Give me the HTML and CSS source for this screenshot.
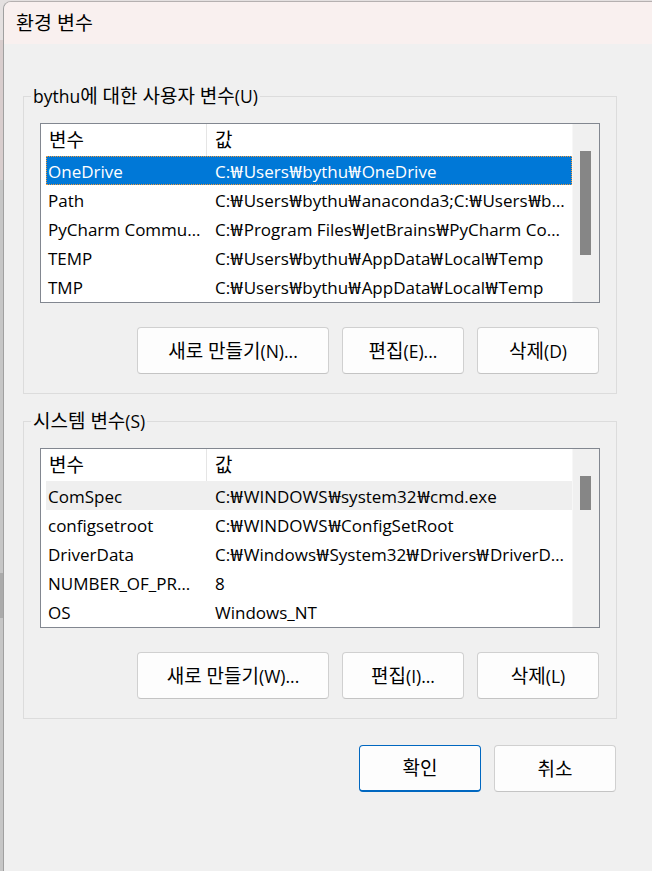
FILE: index.html
```html
<!DOCTYPE html>
<html lang="ko">
<head>
<meta charset="utf-8">
<title>환경 변수</title>
<link rel="stylesheet" href="styles.css">
</head>
<body>
<div class="desk">
  <div class="window">
    <div class="titlebar">환경 변수</div>
    <div class="content">
      <fieldset class="group">
        <legend>bythu<span class="k">에 대한 사용자 변수</span>(U)</legend>
        <div class="group-inner">
          <div class="listview">
            <div class="lv-main">
              <div class="lv-head"><div class="hc c1 k">변수</div><div class="hc c2 k">값</div></div>
              <div class="row selected"><div class="cell c1">OneDrive</div><div class="cell c2">C:<span class="w">₩</span>Users<span class="w">₩</span>bythu<span class="w">₩</span>OneDrive</div></div>
              <div class="row"><div class="cell c1">Path</div><div class="cell c2">C:<span class="w">₩</span>Users<span class="w">₩</span>bythu<span class="w">₩</span>anaconda3;C:<span class="w">₩</span>Users<span class="w">₩</span>bythu<span class="w">₩</span>anaconda3<span class="w">₩</span>Library<span class="w">₩</span>bin</div></div>
              <div class="row"><div class="cell c1">PyCharm Community Edition</div><div class="cell c2">C:<span class="w">₩</span>Program Files<span class="w">₩</span>JetBrains<span class="w">₩</span>PyCharm Community Edition<span class="w">₩</span>bin</div></div>
              <div class="row"><div class="cell c1">TEMP</div><div class="cell c2">C:<span class="w">₩</span>Users<span class="w">₩</span>bythu<span class="w">₩</span>AppData<span class="w">₩</span>Local<span class="w">₩</span>Temp</div></div>
              <div class="row"><div class="cell c1">TMP</div><div class="cell c2">C:<span class="w">₩</span>Users<span class="w">₩</span>bythu<span class="w">₩</span>AppData<span class="w">₩</span>Local<span class="w">₩</span>Temp</div></div>
            </div>
            <div class="scrollbar"><div class="thumb" style="margin-top:27px;height:104px"></div></div>
          </div>
          <div class="btnrow">
            <button class="btn wide"><span class="k">새로 만들기</span>(N)...</button>
            <button class="btn"><span class="k">편집</span>(E)...</button>
            <button class="btn"><span class="k">삭제</span>(D)</button>
          </div>
        </div>
      </fieldset>

      <fieldset class="group second">
        <legend><span class="k">시스템 변수</span>(S)</legend>
        <div class="group-inner">
          <div class="listview">
            <div class="lv-main">
              <div class="lv-head"><div class="hc c1 k">변수</div><div class="hc c2 k">값</div></div>
              <div class="row hover"><div class="cell c1">ComSpec</div><div class="cell c2">C:<span class="w">₩</span>WINDOWS<span class="w">₩</span>system32<span class="w">₩</span>cmd.exe</div></div>
              <div class="row"><div class="cell c1">configsetroot</div><div class="cell c2">C:<span class="w">₩</span>WINDOWS<span class="w">₩</span>ConfigSetRoot</div></div>
              <div class="row"><div class="cell c1">DriverData</div><div class="cell c2">C:<span class="w">₩</span>Windows<span class="w">₩</span>System32<span class="w">₩</span>Drivers<span class="w">₩</span>DriverData</div></div>
              <div class="row"><div class="cell c1">NUMBER_OF_PROCESSORS</div><div class="cell c2">8</div></div>
              <div class="row"><div class="cell c1">OS</div><div class="cell c2">Windows_NT</div></div>
            </div>
            <div class="scrollbar"><div class="thumb" style="margin-top:27px;height:34px"></div></div>
          </div>
          <div class="btnrow">
            <button class="btn wide"><span class="k">새로 만들기</span>(W)...</button>
            <button class="btn"><span class="k">편집</span>(I)...</button>
            <button class="btn"><span class="k">삭제</span>(L)</button>
          </div>
        </div>
      </fieldset>

      <div class="dlg-btns">
        <button class="btn default k">확인</button>
        <button class="btn k">취소</button>
      </div>
    </div>
  </div>
</div>
</body>
</html>
```

FILE: styles.css
```css
html, body {
  margin: 0;
  height: 100%;
  overflow: hidden;
}

body {
  font-family: "Open Sans", "Noto Sans CJK KR", sans-serif;
  font-size: 17px;
  color: #000;
  background: linear-gradient(to bottom, #e4e0e0 0, #e4e0e0 40px, #d8cdcd 40px, #d8cdcd 180px, #c6c6c6 180px, #c6c6c6 573px, #ababab 573px, #ababab 618px, #c6c6c6 618px);
}

.k {
  font-size: 19px;
}

.w {
  display: inline-block;
  width: 13.5px;
  text-align: center;
  transform: scaleX(1.3);
}

.desk {
  display: flex;
  height: 871px;
  box-sizing: border-box;
  padding: 1px 0 0 3px;
}

.window {
  flex: 1;
  background: #f0f0f0;
  border-left: 1px solid #a0a0a0;
  border-top: 1px solid #b5b0b0;
  border-top-left-radius: 8px;
  overflow: hidden;
}

.titlebar {
  height: 42px;
  line-height: 42px;
  background: #f9f0ef;
  padding-left: 12px;
  font-size: 19.5px;
}

.content {
  padding-left: 19px;
}

.group {
  width: 594px;
  box-sizing: border-box;
  margin: 41px 0 0 0;
  padding: 0;
  border: 1px solid #dcdcdc;
  min-width: 0;
}

.group.second {
  margin-top: 16px;
}

.group legend {
  margin-left: 7px;
  padding: 0 2px;
  line-height: 22px;
  height: 22px;
  font-size: 17.5px;
}

.group-inner {
  padding: 16px 16px 19px 16px;
}

.listview {
  display: flex;
  height: 180px;
  box-sizing: border-box;
  border: 1px solid #828790;
  background: #fff;
}

.lv-main {
  flex: 1;
  min-width: 0;
  overflow: hidden;
}

.lv-head {
  display: flex;
  height: 32px;
  line-height: 32px;
}

.hc.c1 {
  width: 166px;
  box-sizing: border-box;
  padding-left: 8px;
  border-right: 1px solid #e5e5e5;
}

.hc.c2 {
  flex: 1;
  padding-left: 8px;
}

.row {
  display: flex;
  height: 29px;
  line-height: 27px;
  margin-left: 5px;
  box-sizing: border-box;
  padding-top: 2px;
}

.row.selected {
  background: #0078d7;
  color: #fff;
  outline: 1px dotted #f09a3c;
  outline-offset: -1px;
}

.row.hover {
  background: #efefef;
}

.cell {
  white-space: nowrap;
  overflow: hidden;
  text-overflow: ellipsis;
  box-sizing: border-box;
}

.cell.c1 {
  width: 161px;
  padding-left: 2px;
  padding-right: 6px;
}

.cell.c2 {
  flex: 1;
  min-width: 0;
  padding-left: 8px;
  padding-right: 6px;
}

.scrollbar {
  width: 27px;
  flex: none;
  background: #f0f0f0;
  border-left: 1px solid #f7f7f7;
  box-sizing: border-box;
  padding-left: 7px;
}

.thumb {
  width: 11px;
  background: #868686;
}

.btnrow {
  display: flex;
  justify-content: flex-end;
  gap: 13px;
  margin-top: 24px;
  padding-right: 1px;
}

.btn {
  width: 122px;
  height: 47px;
  box-sizing: border-box;
  background: #fdfdfd;
  border: 1px solid #d0d0d0;
  border-bottom-color: #c4c4c4;
  border-radius: 4px;
  font-family: inherit;
  font-size: 17.5px;
  line-height: 22px;
  color: #000;
  padding: 0;
}

.btn.k {
  font-size: 19px;
}

.btn.wide {
  width: 192px;
}

.btn.default {
  border: 1px solid #0067c0;
  border-bottom-width: 2px;
}

.dlg-btns {
  width: 594px;
  display: flex;
  justify-content: flex-end;
  gap: 13px;
  margin-top: 26px;
  padding-right: 1px;
  box-sizing: border-box;
}
```
